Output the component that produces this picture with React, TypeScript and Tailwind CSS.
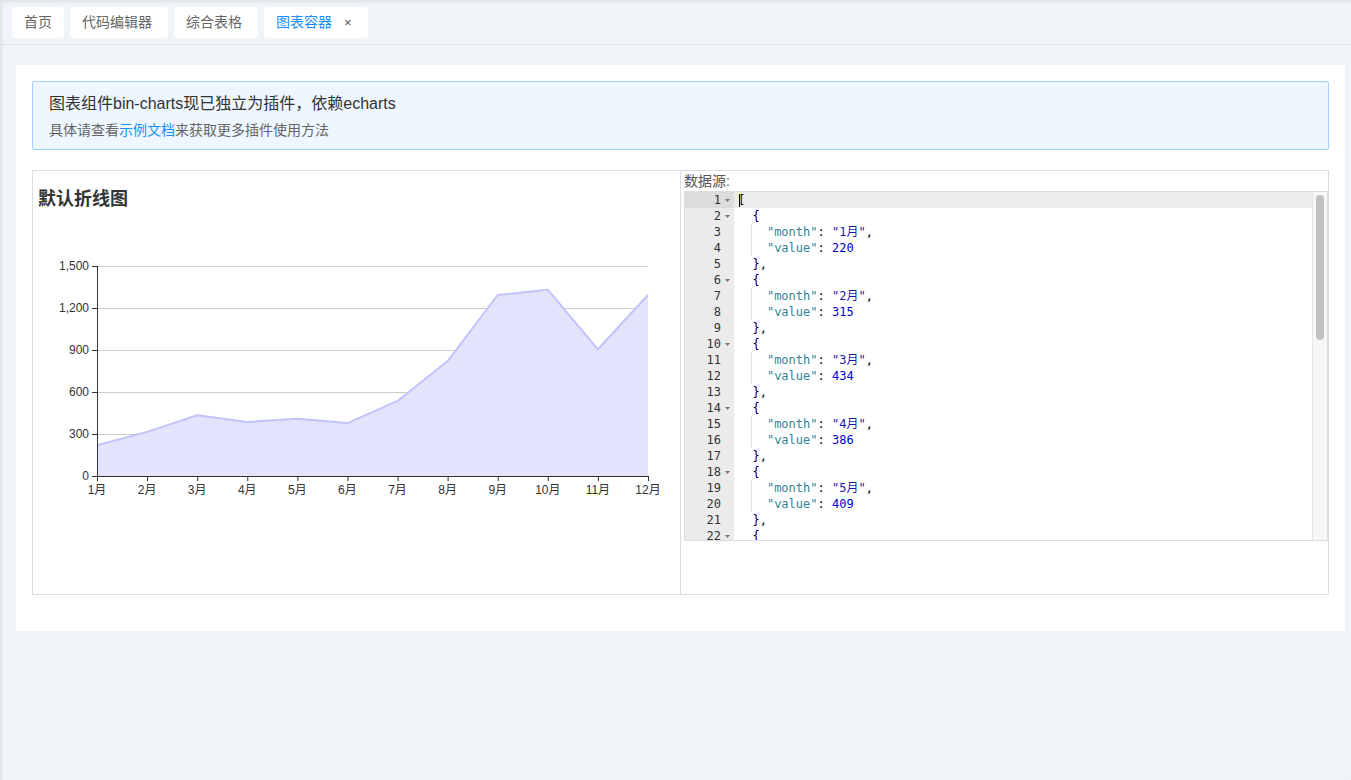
import React from 'react';

const months = ['1月', '2月', '3月', '4月', '5月', '6月', '7月', '8月', '9月', '10月', '11月', '12月'];
const values = [220, 315, 434, 386, 409, 378, 536, 821, 1293, 1331, 905, 1293];

const tabs = [
  { title: '首页', active: false, width: 'w-[52px] justify-center' },
  { title: '代码编辑器', active: false, width: 'w-[98px] pl-[12px]' },
  { title: '综合表格', active: false, width: 'w-[84px] pl-[12px]' },
  { title: '图表容器', active: true, width: 'w-[104px] pl-[12px]' },
];

// chart geometry (svg coords)
const X0 = 64;
const STEP = 50.09;
const Y0 = 264;
const SCALE = 0.14;
const px = (i: number) => X0 + i * STEP;
const py = (v: number) => Y0 - v * SCALE;

const LineChart: React.FC = () => {
  const line = values.map((v, i) => `${px(i)},${py(v)}`).join(' ');
  const area = `${px(0)},${Y0} ${line} ${px(11)},${Y0}`;
  const ticks = [0, 300, 600, 900, 1200, 1500];

  return (
    <svg width="647" height="380" className="block">
      {ticks.slice(1).map((t) => (
        <line key={t} x1={X0} x2={px(11)} y1={py(t) + 0.5} y2={py(t) + 0.5} stroke="#cccccc" strokeWidth="1" />
      ))}
      <polygon points={area} fill="#e3e3fb" />
      <polyline points={line} fill="none" stroke="#c3c3fa" strokeWidth="2" strokeLinejoin="round" />
      <line x1={X0 + 0.5} x2={X0 + 0.5} y1={py(1500)} y2={Y0} stroke="#333" strokeWidth="1" />
      <line x1={X0} x2={px(11) + 0.5} y1={Y0 + 0.5} y2={Y0 + 0.5} stroke="#333" strokeWidth="1" />
      {ticks.map((t) => (
        <g key={t}>
          <line x1={X0 - 5} x2={X0} y1={py(t) + 0.5} y2={py(t) + 0.5} stroke="#333" strokeWidth="1" />
          <text
            x={X0 - 8}
            y={py(t) + 4}
            textAnchor="end"
            fontSize="12"
            fill="#333"
            fontFamily="'Liberation Sans', 'Noto Sans CJK SC', sans-serif"
          >
            {t.toLocaleString('en-US')}
          </text>
        </g>
      ))}
      {months.map((m, i) => (
        <g key={m}>
          <line x1={px(i) + 0.5} x2={px(i) + 0.5} y1={Y0} y2={Y0 + 5} stroke="#333" strokeWidth="1" />
          <text
            x={px(i)}
            y={Y0 + 18}
            textAnchor="middle"
            fontSize="12"
            fill="#333"
            fontFamily="'Liberation Sans', 'Noto Sans CJK SC', sans-serif"
          >
            {m}
          </text>
        </g>
      ))}
    </svg>
  );
};

type Token = { text: string; cls: string };
type CodeLine = { indent: number; tokens: Token[]; fold: boolean };

const buildLines = (): CodeLine[] => {
  const out: CodeLine[] = [{ indent: 0, tokens: [{ text: '[', cls: 'text-black' }], fold: true }];
  values.forEach((v, i) => {
    out.push({ indent: 2, tokens: [{ text: '{', cls: 'text-black' }], fold: true });
    out.push({
      indent: 4,
      tokens: [
        { text: '"month"', cls: 'text-[#318495]' },
        { text: ': ', cls: 'text-black' },
        { text: `"${months[i]}"`, cls: 'text-[#1a1aa6]' },
        { text: ',', cls: 'text-black' },
      ],
      fold: false,
    });
    out.push({
      indent: 4,
      tokens: [
        { text: '"value"', cls: 'text-[#318495]' },
        { text: ': ', cls: 'text-black' },
        { text: String(v), cls: 'text-[#0000cd]' },
      ],
      fold: false,
    });
    out.push({ indent: 2, tokens: [{ text: i === values.length - 1 ? '}' : '},', cls: 'text-black' }], fold: false });
  });
  out.push({ indent: 0, tokens: [{ text: ']', cls: 'text-black' }], fold: false });
  // only the lines that fit in the editor viewport
  return out.slice(0, 22);
};

const CodeEditor: React.FC = () => {
  const lines = buildLines();
  return (
    <div className="relative h-[350px] overflow-hidden border border-[#dddddd] font-['DejaVu_Sans_Mono','Noto_Sans_CJK_SC',monospace] text-[12px] leading-[16px]">
      <div className="flex">
        <div className="w-[49px] shrink-0 bg-[#ebebeb] text-[#333]">
          {lines.map((l, i) => (
            <div key={i} className={`flex h-[16px] justify-end ${i === 0 ? 'bg-[#dcdcdc]' : ''}`}>
              <span>{i + 1}</span>
              <span className="flex w-[13px] items-center justify-center">
                {l.fold && (
                  <svg width="5" height="3" viewBox="0 0 5 3">
                    <path d="M0 0 L5 0 L2.5 3 Z" fill="#777" />
                  </svg>
                )}
              </span>
            </div>
          ))}
        </div>
        <div className="flex-1">
          {lines.map((l, i) => (
            <div key={i} className={`relative h-[16px] whitespace-pre pl-[4px] ${i === 0 ? 'bg-[#ececec]' : ''}`}>
              {i === 0 && <span className="absolute left-[5px] top-[2px] h-[13px] w-px bg-black" />}
              {l.indent === 4 && <span className="absolute left-[17px] top-0 h-[16px] w-px bg-[#e2e2e2]" />}
              <span>{' '.repeat(l.indent)}</span>
              {l.tokens.map((t, j) => (
                <span key={j} className={t.cls}>
                  {t.text}
                </span>
              ))}
            </div>
          ))}
        </div>
      </div>
      <div className="absolute right-0 top-0 h-full w-[15px] border-l border-[#e6e6e6] bg-[#f7f7f7]">
        <div className="mx-auto mt-[3px] h-[145px] w-[8px] rounded-full bg-[#c1c1c1]" />
      </div>
    </div>
  );
};

export default function App() {
  return (
    <div className="min-h-screen w-full bg-[#f0f3f7] font-['Liberation_Sans','Noto_Sans_CJK_SC',sans-serif] shadow-[inset_2px_2px_3px_rgba(0,0,0,0.07)]">
      <div className="flex h-[45px] gap-[6px] border-b border-[#dde2e8] px-[12px] pt-[7px]">
        {tabs.map((tab) => (
          <div
            key={tab.title}
            className={`flex h-[31px] items-center rounded-[3px] bg-white text-[14px] ${tab.width} ${
              tab.active ? 'text-[#1890ff]' : 'text-[#666]'
            }`}
          >
            <span>{tab.title}</span>
            {tab.active && <span className="ml-[12px] text-[13px] text-[#555]">×</span>}
          </div>
        ))}
      </div>

      <div className="ml-[16px] mr-[6px] mt-[20px] bg-white px-[16px] pb-[36px] pt-[16px]">
        <div className="rounded-[2px] border border-[#a3d0fd] bg-[#eef6ff] px-[16px] pb-[8px] pt-[10px]">
          <div className="text-[16px] leading-[24px] text-[#333]">图表组件bin-charts现已独立为插件，依赖echarts</div>
          <div className="mt-[3px] text-[14px] leading-[22px] text-[#666]">
            具体请查看<span className="text-[#1890ff]">示例文档</span>来获取更多插件使用方法
          </div>
        </div>

        <div className="mt-[20px] flex h-[425px] border border-[#dddddd]">
          <div className="w-[648px] shrink-0 border-r border-[#dddddd]">
            <div className="mt-[15px] pl-[5px] text-[18px] font-bold leading-[26px] text-[#333]">默认折线图</div>
            <LineChart />
          </div>
          <div className="flex-1 pl-[3px]">
            <div className="text-[14px] leading-[20px] text-[#555]">数据源:</div>
            <CodeEditor />
          </div>
        </div>
      </div>
    </div>
  );
}
